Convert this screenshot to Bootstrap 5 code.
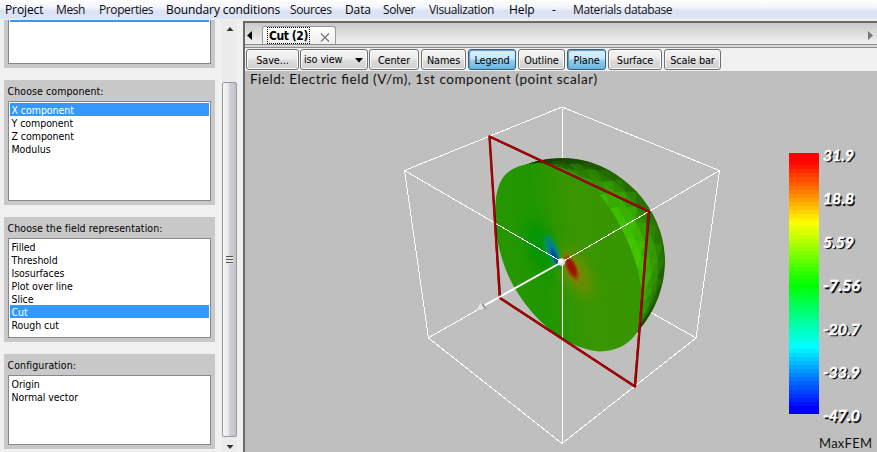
<!DOCTYPE html>
<html lang="en">
<head>
<meta charset="utf-8">
<title>MaxFEM</title>
<meta name="viewport" content="width=device-width, initial-scale=1">
<link href="https://cdn.jsdelivr.net/npm/bootstrap@5.3.0/dist/css/bootstrap.min.css" rel="stylesheet">
<style>
body{width:877px;height:452px;overflow:hidden;background:#f0f0f0;color:#000;font:10.5px/13px "DejaVu Sans Condensed","DejaVu Sans",sans-serif;letter-spacing:-.05px}
.menubar{height:20px;background:linear-gradient(#fff 0,#f4f6fc 35%,#dce3f5 55%,#dde3f4 90%,#f0f0f0 100%);font:12px/19px "Open Sans","Noto Sans",sans-serif;letter-spacing:-.1px;padding-left:5px}
.menubar a{color:#111;text-decoration:none;white-space:nowrap;flex:none}
.menubar a.snug{letter-spacing:-.4px}
.side{width:215px;padding-left:4px;gap:12px}
.group{background:#c8c8c8;padding:4px 4px 4px 4px;height:125px}
.group.clipped{height:48px;padding-top:0}
.group.short{height:95px}
.group label{height:17px;line-height:14px;white-space:nowrap;letter-spacing:.09px;margin-left:-.5px}
.listbox{background:#fff;border:1px solid #828790;padding:1px;margin:0;width:203px}
.clipped .listbox{border-top:0;padding-top:0}
.listbox li{height:13px;line-height:15px;padding-left:1.5px;list-style:none;white-space:nowrap}
.listbox li.sel{background:#3399ff;color:#fff}
.clipped .sel{height:2px!important}
.scroller{width:15px;margin-left:7px;background:#ebebeb}
.scroller svg{display:block}
.thumb{border:1px solid #979797;border-radius:2px;background:linear-gradient(90deg,#f6f6f6,#e8e8ea 45%,#d0d1d6 50%,#c2c3ca);height:355px}
.grip{width:7px;height:8px;background:repeating-linear-gradient(#555 0 1px,#e8e8e8 1px 3px);margin-right:1px}
.pane{width:634px;border-left:2px solid #696969;border-top:2px solid #696969;margin-left:6px;margin-top:1px}
.tabs{height:22px;background:linear-gradient(#c9c9c9,#f1f1f1);border-bottom:1px solid #8b8b8b}
.tab-on{width:74px;height:18px;margin-top:3px;margin-left:8px;background:linear-gradient(#fff,#f0f0f0);border:1px solid #999;border-bottom:0;border-radius:3px 3px 0 0}
.tab-on span{font:bold 12px/16px "DejaVu Sans Condensed","DejaVu Sans",sans-serif;border:1px dotted #000;width:43px;height:17px;margin-left:4px;letter-spacing:-.45px;text-align:center;white-space:nowrap}
.tools{height:26px;padding:4px 0 1px 1px;background:linear-gradient(#d8d8d8 0 2px,#8b8b8b 2px 3px,#f0f0f0 3px);}
.tb{--bs-btn-padding-x:0;--bs-btn-padding-y:0;--bs-btn-font-size:10.8px;--bs-btn-line-height:21px;--bs-btn-border-radius:3px;--bs-btn-color:#000;height:21px;border:1px solid #707070;background:linear-gradient(#f4f4f4,#ececec 48%,#dedede 52%,#cfcfcf);box-shadow:inset 0 0 0 1px #fafafa;flex:none;margin-right:2px;white-space:nowrap;font-family:"DejaVu Sans Condensed","DejaVu Sans",sans-serif;letter-spacing:-.1px}
.tb.lit{border-color:#2c628b;background:linear-gradient(#dff2fc,#c3e6f8 48%,#98d1ef 52%,#68b3db);box-shadow:inset 1px 1px 1px #6b96ad}
.scene{display:block;background:#bfbfbf}
.vt{font-family:Lato,sans-serif;letter-spacing:0}
.w54{width:53px;margin-right:1px}.w68{width:68px;margin-right:1px}.w50{width:50px}.w45{width:45px}.w48{width:48px}.w47{width:47px}.w39{width:39px}.w54b{width:54px}.w57{width:57px}
</style>
<script src="https://cdn.jsdelivr.net/npm/bootstrap@5.3.0/dist/js/bootstrap.bundle.min.js"></script>
</head>
<body>
<nav class="menubar d-flex">
<a style="width:51px">Project</a><a class="snug" style="width:43px">Mesh</a><a class="snug" style="width:67px">Properties</a><a style="width:124px">Boundary conditions</a><a class="snug" style="width:55px">Sources</a><a style="width:38px">Data</a><a class="snug" style="width:46px">Solver</a><a class="snug" style="width:80px">Visualization</a><a style="width:43px">Help</a><a style="width:21px">-</a><a class="snug">Materials database</a>
</nav>
<div class="d-flex" style="height:432px">
<aside class="side d-flex flex-column">
<div class="group clipped d-flex"><ul class="listbox flex-fill"><li class="sel"></li></ul></div>
<div class="group d-flex flex-column"><label>Choose component:</label><ul class="listbox flex-fill"><li class="sel">X component</li><li>Y component</li><li>Z component</li><li>Modulus</li></ul></div>
<div class="group d-flex flex-column"><label>Choose the field representation:</label><ul class="listbox flex-fill"><li>Filled</li><li>Threshold</li><li>Isosurfaces</li><li>Plot over line</li><li>Slice</li><li class="sel">Cut</li><li>Rough cut</li></ul></div>
<div class="group short d-flex flex-column"><label>Configuration:</label><ul class="listbox flex-fill"><li>Origin</li><li>Normal vector</li></ul></div>
</aside>
<div class="scroller d-flex flex-column">
<svg width="15" height="62"><path d="M4.500 11L8 7l3.500 4z" fill="#333"/></svg>
<div class="thumb d-flex align-items-center justify-content-center"><div class="grip"></div></div>
<svg width="15" height="15"><path d="M4.500 8h7L8 12z" fill="#333"/></svg>
</div>
<main class="pane">
<div class="tabs d-flex">
<svg width="9" height="21"><path d="M7 8v9L2 12.500z" fill="#000"/></svg>
<div class="tab-on d-flex"><span>Cut (2)</span><svg width="20" height="18"><path d="M11 6.500l8 8m0-8l-8 8" stroke="#777" stroke-width="1.300"/></svg></div>
<svg class="ms-auto" width="12" height="21"><path d="M3 8v9l5-4.500z" fill="#777"/></svg>
</div>
<div class="tools d-flex">
<button class="btn tb w54">Save...</button><button class="btn tb w68 d-flex align-items-center justify-content-between"><span class="ps-1" style="margin-left:-1px">iso view</span><svg width="14" height="8"><path d="M2 2h8l-4 4.500z"/></svg></button><button class="btn tb w50">Center</button><button class="btn tb w45">Names</button><button class="btn tb lit w48">Legend</button><button class="btn tb w47">Outline</button><button class="btn tb lit w39">Plane</button><button class="btn tb w54b">Surface</button><button class="btn tb w57">Scale bar</button>
</div>
<svg class="scene" width="632" height="381" viewBox="245 71 632 381">
<defs>
<linearGradient id="face" gradientUnits="userSpaceOnUse" x1="500" y1="270" x2="640" y2="250"><stop offset="0" stop-color="#279600"/><stop offset=".3" stop-color="#1f9600"/><stop offset=".55" stop-color="#399600"/><stop offset="1" stop-color="#359600"/></linearGradient>
<radialGradient id="gr"><stop offset="0" stop-color="#009610"/><stop offset=".4" stop-color="#069600" stop-opacity=".85"/><stop offset="1" stop-color="#209600" stop-opacity="0"/></radialGradient>
<radialGradient id="ye"><stop offset="0" stop-color="#967800"/><stop offset=".4" stop-color="#768c00" stop-opacity=".85"/><stop offset="1" stop-color="#3c9600" stop-opacity="0"/></radialGradient>
<radialGradient id="bl"><stop offset="0" stop-color="#006096"/><stop offset=".35" stop-color="#008090"/><stop offset=".7" stop-color="#009078" stop-opacity=".7"/><stop offset="1" stop-color="#009620" stop-opacity="0"/></radialGradient>
<radialGradient id="re"><stop offset="0" stop-color="#a00800"/><stop offset=".4" stop-color="#961e00"/><stop offset=".7" stop-color="#966000" stop-opacity=".8"/><stop offset="1" stop-color="#8a8a00" stop-opacity="0"/></radialGradient>
<clipPath id="shellclip"><path d="M523 166C537 160 550 158 562 158C590 158 615 170 637 192C655 212 665 236 665 262C664 295 650 322 627 342L590 330L540 230Z"/></clipPath>
</defs>
<g fill="none" stroke="#fff" stroke-width="1" shape-rendering="crispEdges">
<path d="M562.500 107V262M562 262L696 338M562 262L428 338"/>
</g>
<g clip-path="url(#shellclip)"><path d="M520 150H670V345H520z" fill="#286800"/><g id="facets"></g></g>
<path id="disk" fill="url(#face)" d="M495.300 206C496 192 499 182 505 175C513 167 523 164 537 163C553 163 568 169 583 178C592 185 598 192 603 199C614 213 620 225 626 238C634 254 640 275 642 295C643 312 641 325 637 332C631 343 618 351 600 351.500C588 351 575 346 562 338C540 324 526 307 514 287C503 267 494 240 495.300 206Z"/>
<ellipse cx="540" cy="247" rx="23" ry="48" fill="url(#gr)" transform="rotate(-18 540 247)"/>
<ellipse cx="577" cy="273" rx="23" ry="42" fill="url(#ye)" opacity=".7" transform="rotate(-28 577 273)"/>
<ellipse cx="552.500" cy="251" rx="7.500" ry="22" fill="url(#bl)" transform="rotate(-22 552.500 251)"/>
<ellipse cx="555" cy="257" rx="2.600" ry="8" fill="#0030a0" opacity=".55" transform="rotate(-25 555 257)"/>
<ellipse cx="571.500" cy="267.500" rx="7.500" ry="19" fill="url(#re)" transform="rotate(-25 571.500 267.500)"/>
<g fill="none" stroke="#fff" shape-rendering="crispEdges">
<path d="M562 107L404.500 170.500L562 262L719.500 170.500ZM404.500 170.500L428.500 338L562 443.500L696 338L719.500 170.500M562.500 262V443.500"/>
</g>
<g fill="none" stroke-linejoin="round"><path d="M489.500 136.500L649 211.500L635 386.500L500 298Z" stroke="#5c0000" stroke-width="2.400"/><path d="M489.500 136.500L649 211L634.500 386.500L499.500 298Z" stroke="#b40000" stroke-width="1.600"/></g>
<path d="M562 262L485 305" stroke="#fff" stroke-width="2"/>
<path d="M476.500 310L481 302L487.500 309.500Z" fill="#e4e4e4"/><path d="M481 302L487.500 309.500L483 306.500Z" fill="#777"/><path d="M482 310L487.500 309.500L485 307Z" fill="#aaa"/>
<circle cx="561.500" cy="262" r="3.700" fill="#dcdcdc"/><circle cx="560.800" cy="261.200" r="2.200" fill="#fff"/>
<text class="vt" x="250" y="84" font-size="13.500" textLength="347" fill="#111">Field: Electric field (V/m), 1st component (point scalar)</text>
<text class="vt" x="819" y="448" font-size="13" textLength="53" fill="#111">MaxFEM</text>
<g id="bar" shape-rendering="crispEdges"></g>
<g id="ticks" class="vt" font-size="16" font-weight="700" font-style="italic"></g>
</svg>
</main>
</div>
<script>
const NS="http://www.w3.org/2000/svg";
function add(parent,name,attrs,text){const e=document.createElementNS(NS,name);for(const k in attrs)e.setAttribute(k,attrs[k]);if(text)e.textContent=text;document.getElementById(parent).appendChild(e)}
// Scalar bar: 64 hue steps from red to blue
for(let i=0;i<64;i++){const h=Math.max(0,Math.min(240,(i-1.500)*240/60.500));add("bar","rect",{x:789,y:153+Math.round(i*261/64),width:30,height:5-(i===63?1:0),fill:`hsl(${h},100%,50%)`})}
["31.9","18.8","5.59","-7.56","-20.7","-33.9","-47.0"].forEach((s,i)=>{const y=161+i*43.400,w=s[0]==="-"?37:31,o={"textLength":w,lengthAdjust:"spacingAndGlyphs","stroke-width":.4};
add("ticks","text",{...o,x:824.500,y:y+1.300,fill:"#111",stroke:"#111"},s);add("ticks","text",{...o,x:823,y:y,fill:"#fff",stroke:"#fff"},s)});
// Shell facets between the cut edge and the silhouette
const A=[[523,166],[540,163],[562,166],[583,178],[603,199],[615,216],[626,238],[635,260],[640,280],[642,300],[642,317],[637,332],[627,342]];
const B=[[523,166],[540,160],[562,158],[590,161],[613,171],[632,186],[648,207],[660,232],[665,257],[663,280],[657,300],[645,322],[627,342]];
const lum=[.38,.42,.54,.7,.86,.93,.96,.95,.9,.8,.66,.5,.38],M=4;
const rnd=(a,b)=>{const v=Math.sin(a*91.700+b*47.300)*4375;return v-Math.floor(v)-.5};
function at(P,t){const i=Math.min(P.length-2,Math.floor(t)),f=t-i;return [P[i][0]+(P[i+1][0]-P[i][0])*f,P[i][1]+(P[i+1][1]-P[i][1])*f]}
function pt(i,j){const t=Math.max(0,Math.min(12,i*.75+(j%2?.37:0)+rnd(i,j)*.1)),p=at(A,t),q=at(B,t);const f=j/M;return [p[0]+(q[0]-p[0])*f,p[1]+(q[1]-p[1])*f]}
for(let i=-1;i<16;i++)for(let j=0;j<M;j++){const a=pt(i,j),b=pt(i+1,j),c=pt(i+1,j+1),d=pt(i,j+1);
(j%2?[[a,b,c],[a,c,d]]:[[a,b,d],[b,c,d]]).forEach((tri,k)=>{const u=Math.max(0,Math.min(11.99,(i+.5)*.75)),n=Math.floor(u),base=lum[n]+(lum[n+1]-lum[n])*(u-n);
const L=base*(1-Math.pow((j+k*.5)/M,1.600)*.5)+rnd(i+k*7,j+3)*.05,f=`rgb(${Math.round(68*L)},${Math.round(205*L)},0)`;
add("facets","polygon",{points:tri.map(p=>p.join(",")).join(" "),fill:f,stroke:f,"stroke-width":.5})})}
</script>
</body>
</html>
